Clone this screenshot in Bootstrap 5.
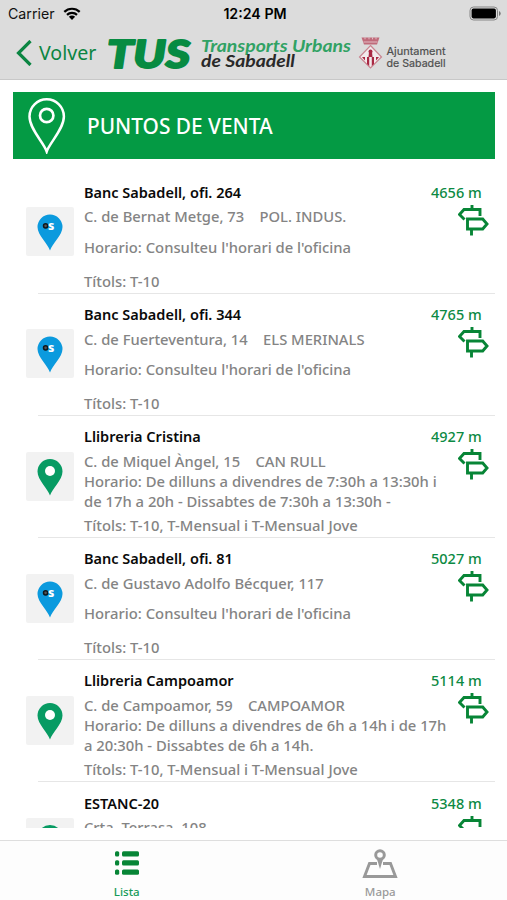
<!DOCTYPE html>
<html lang="ca">
<head>
<meta charset="utf-8">
<meta name="viewport" content="width=device-width, initial-scale=1">
<title>TUS - Puntos de venta</title>
<link href="https://cdn.jsdelivr.net/npm/bootstrap@5.3.0/dist/css/bootstrap.min.css" rel="stylesheet">
<style>
body{height:900px;overflow:hidden;font-family:"Noto Sans",sans-serif;color:#848484;background:#fff}
svg{display:block;flex:none}
.top{height:80px;background:#dcdcdc;border-bottom:1px solid #c8c8c8}
.status{height:27px;padding:0 5px 0 8px;font:14.2px/20px Inter,sans-serif;color:#111}
.status>*{flex:1}
.clock{font-weight:600;color:#000;line-height:27px}
.brandbar{height:52px;padding-left:16px}
.back{font-size:19.6px;line-height:52px;color:#0b8542;text-decoration:none;width:92px}
.banner{height:67px;margin:12px 12px 0 13px;background:#049a44;color:#fff;font-size:20.85px;font-weight:500}
.banner svg{margin:0 21px 0 14px}
.banner span{padding-top:2px}
.stops{height:656px;overflow:hidden;margin-top:12.6px;margin-right:12px;font-size:14.8px;font-weight:500}
.stop{height:122.15px;padding-left:26px;position:relative}
.stop::after{content:"";position:absolute;left:38px;right:0;bottom:0;height:1px;background:#e6e6e6}
.thumb{width:48px;height:49px;background:#f2f2f2;border-radius:2px;margin:35.700px 10px 0 0}
.info{width:366px;padding-top:8.3px}
.name{color:#0a0a0a;font-weight:600;font-size:14.5px;line-height:24px;height:24.5px}
.addr{font-size:14.75px;line-height:24px;height:22.500px;white-space:pre}
.hours{height:40px;line-height:20.3px;white-space:nowrap}
.fares{line-height:28px;height:26px}
.dist{color:#0c8a43;width:60px;margin-left:-19px;padding-top:8.3px;font-size:14.5px;line-height:24px;white-space:nowrap}
.dist svg{margin:1px 0 0 27px}
.tabs{height:60px;border-top:1px solid #dedede;background:#fdfdfd;font-size:11.5px;font-weight:500;line-height:14px;color:#9a9a9a}
.tabs a{color:inherit;text-decoration:none;padding-top:7px}
.tabs .on{color:#169b59}
</style>
<script src="https://cdn.jsdelivr.net/npm/bootstrap@5.3.0/dist/js/bootstrap.bundle.min.js"></script>
</head>
<body class="d-flex flex-column">
<svg width="0" height="0" class="position-absolute">
<symbol id="bank" viewBox="0 0 48 49"><path d="M24 43.500C22 37 11.500 28 11.500 20a12.500 12.500 0 0 1 25 0C36.500 28 26 37 24 43.500Z" fill="#0b9ade"/><circle cx="19.600" cy="18.800" r="2.100" fill="#555" stroke="#10181c" stroke-width="1.500"/><text x="22" y="23.300" font-family="Noto Sans" font-weight="800" font-size="12.500" fill="#fff">s</text></symbol>
<symbol id="shop" viewBox="0 0 48 49"><path d="M24 43.500C22 37 11.500 28 11.500 19.500a12.500 12.500 0 0 1 25 0C36.500 28 26 37 24 43.500Z" fill="#079b63"/><circle cx="24" cy="19" r="5" fill="#fff"/></symbol>
<symbol id="sign" viewBox="0 0 31 31"><path d="M14 0v5M22 11V4.500H6L1.500 9.500 6.500 14.500M9.500 14h15.200l4.300 5-4.300 5H9.500ZM13.500 24v6.500" fill="none" stroke="#078536" stroke-width="2.900"/></symbol>
</svg>
<header class="top flex-shrink-0">
<div class="status d-flex">
<div class="d-flex align-items-center"><span>Carrier</span>
<svg class="ms-2" width="18" height="13" viewBox="0 0 18 13"><g fill="none" stroke="#000" stroke-width="2.200"><path d="M1.300 4.900a11 11 0 0 1 15.400 0M4 7.900a7.200 7.200 0 0 1 10 0"/></g><path d="M5.900 9.800a4.400 4.400 0 0 1 6.200 0L9 12.900Z"/></svg></div>
<div class="clock text-center">12:24 PM</div>
<div class="d-flex justify-content-end align-items-center"><svg width="33" height="15" viewBox="0 0 33 15"><rect x="1" y="1" width="27.500" height="13" rx="3.500" fill="none" stroke="#858585"/><rect x="2.600" y="2.600" width="24.300" height="9.800" rx="1.800"/><path d="M30 5v5q1.700-.7 1.700-2.500T30 5" fill="#777"/></svg></div>
</div>
<div class="brandbar d-flex align-items-center">
<a href="#" class="back d-flex align-items-center"><svg width="16" height="26" viewBox="0 0 16 26"><path d="M14.500 1 2.500 13l12 12" fill="none" stroke="#0b8542" stroke-width="3.200"/></svg><span style="margin-left:7px">Volver</span></a>
<svg width="345" height="44" viewBox="0 0 345 44">
<text x="-1" y="36.500" font-family="Lato,sans-serif" font-weight="900" font-style="italic" fill="#078b42" stroke="#078b42" stroke-width="2" stroke-linejoin="round" font-size="38" textLength="83" lengthAdjust="spacingAndGlyphs">TUS</text>
<text x="93" y="21" font-family="Lato,sans-serif" font-weight="700" font-style="italic" font-size="16.800" fill="#31a264" textLength="150" lengthAdjust="spacingAndGlyphs">Transports Urbans</text>
<text x="93" y="36" font-family="Lato,sans-serif" font-weight="700" font-style="italic" font-size="16.300" fill="#292929" textLength="94" lengthAdjust="spacingAndGlyphs">de Sabadell</text>
<g transform="translate(251 6)"><path d="M2.500.5h18L18 7.500H5Z" fill="#c06b7b"/><path d="M6 .5v1.800M10 .5v1.800M13.500 .5v1.800M17 .5v1.800M4.500 5h14" stroke="#ead2d7" stroke-width=".8"/><path d="M11.500 8.500 22.500 20 11.500 31 .5 20Z" fill="#f2e9eb" stroke="#c98490" stroke-width="1.200"/><path d="M3 20h3v3.500ZM8 20h2.200v9L8 27ZM12.800 20H15v7l-2.200 2ZM17 20h3l-3 3.500Z" fill="#a92843"/><path d="M10 15h3l.5 5h-4Z" fill="#a92843"/><circle cx="11.500" cy="14.500" r="2" fill="#a92843"/></g>
<g font-family="Inter,sans-serif" font-size="10.800" fill="#4e4e4e" stroke="#4e4e4e" stroke-width=".2"><text x="278.500" y="24" textLength="59" lengthAdjust="spacingAndGlyphs">Ajuntament</text><text x="278.500" y="36" textLength="59" lengthAdjust="spacingAndGlyphs">de Sabadell</text></g>
</svg>
</div>
</header>
<div class="banner d-flex align-items-center flex-shrink-0"><svg width="39" height="57" viewBox="0 0 39 57"><path d="M19.700 54.500C17 46 2.500 32 2.500 19.500a17.200 17.200 0 0 1 34.400 0C36.900 32 22.500 46 19.700 54.500Z" fill="none" stroke="#fff" stroke-width="2.500"/><circle cx="19.700" cy="18.500" r="6.700" fill="none" stroke="#fff" stroke-width="2.700"/></svg><span>PUNTOS DE VENTA</span></div>
<main class="stops flex-shrink-0">
<div class="stop d-flex"><div class="thumb"><svg width="48" height="49"><use href="#bank"/></svg></div><div class="info"><div class="name">Banc Sabadell, ofi. 264</div><div class="addr">C. de Bernat Metge, 73    POL. INDUS.</div><div class="hours d-flex align-items-center">Horario: Consulteu l'horari de l'oficina</div><div class="fares">Títols: T-10</div></div><div class="dist flex-shrink-0">4656 m<svg width="31" height="31"><use href="#sign"/></svg></div></div>
<div class="stop d-flex"><div class="thumb"><svg width="48" height="49"><use href="#bank"/></svg></div><div class="info"><div class="name">Banc Sabadell, ofi. 344</div><div class="addr">C. de Fuerteventura, 14    ELS MERINALS</div><div class="hours d-flex align-items-center">Horario: Consulteu l'horari de l'oficina</div><div class="fares">Títols: T-10</div></div><div class="dist flex-shrink-0">4765 m<svg width="31" height="31"><use href="#sign"/></svg></div></div>
<div class="stop d-flex"><div class="thumb"><svg width="48" height="49"><use href="#shop"/></svg></div><div class="info"><div class="name">Llibreria Cristina</div><div class="addr">C. de Miquel Àngel, 15    CAN RULL</div><div class="hours d-flex align-items-center">Horario: De dilluns a divendres de 7:30h a 13:30h i<br>de 17h a 20h - Dissabtes de 7:30h a 13:30h -</div><div class="fares">Títols: T-10, T-Mensual i T-Mensual Jove</div></div><div class="dist flex-shrink-0">4927 m<svg width="31" height="31"><use href="#sign"/></svg></div></div>
<div class="stop d-flex"><div class="thumb"><svg width="48" height="49"><use href="#bank"/></svg></div><div class="info"><div class="name">Banc Sabadell, ofi. 81</div><div class="addr">C. de Gustavo Adolfo Bécquer, 117</div><div class="hours d-flex align-items-center">Horario: Consulteu l'horari de l'oficina</div><div class="fares">Títols: T-10</div></div><div class="dist flex-shrink-0">5027 m<svg width="31" height="31"><use href="#sign"/></svg></div></div>
<div class="stop d-flex"><div class="thumb"><svg width="48" height="49"><use href="#shop"/></svg></div><div class="info"><div class="name">Llibreria Campoamor</div><div class="addr">C. de Campoamor, 59    CAMPOAMOR</div><div class="hours d-flex align-items-center">Horario: De dilluns a divendres de 6h a 14h i de 17h<br>a 20:30h - Dissabtes de 6h a 14h.</div><div class="fares">Títols: T-10, T-Mensual i T-Mensual Jove</div></div><div class="dist flex-shrink-0">5114 m<svg width="31" height="31"><use href="#sign"/></svg></div></div>
<div class="stop d-flex"><div class="thumb"><svg width="48" height="49"><use href="#shop"/></svg></div><div class="info"><div class="name">ESTANC-20</div><div class="addr">Crta. Terrasa, 108</div></div><div class="dist flex-shrink-0">5348 m<svg width="31" height="31"><use href="#sign"/></svg></div></div>
</main>
<nav class="tabs d-flex mt-auto flex-shrink-0 text-center">
<a href="#" class="on w-50"><svg class="mx-auto" width="25" height="31" viewBox="0 0 25 31"><g fill="#078536"><rect x="1" y="3.300" width="4.200" height="5.200" rx="1.500"/><rect x="8" y="3.300" width="17" height="5.200" rx="1.500"/><rect x="1" y="12.300" width="4.200" height="5.200" rx="1.500"/><rect x="8" y="12.300" width="17" height="5.200" rx="1.500"/><rect x="1" y="21.500" width="4.200" height="5.200" rx="1.500"/><rect x="8" y="21.500" width="17" height="5.200" rx="1.500"/></g></svg><div style="margin-top:6px">Lista</div></a>
<a href="#" class="w-50"><svg class="mx-auto" width="36" height="31" viewBox="0 0 36 31"><path d="M15 15.500H7.500L2.500 28.500h31L28.500 15.500H21" fill="none" stroke="#999" stroke-width="2.900"/><circle cx="18" cy="7" r="4.300" fill="none" stroke="#999" stroke-width="3"/><path d="M14.800 10.500 18 21l3.200-10.500Z" fill="#999"/></svg><div style="margin-top:6px">Mapa</div></a>
</nav>
</body>
</html>
